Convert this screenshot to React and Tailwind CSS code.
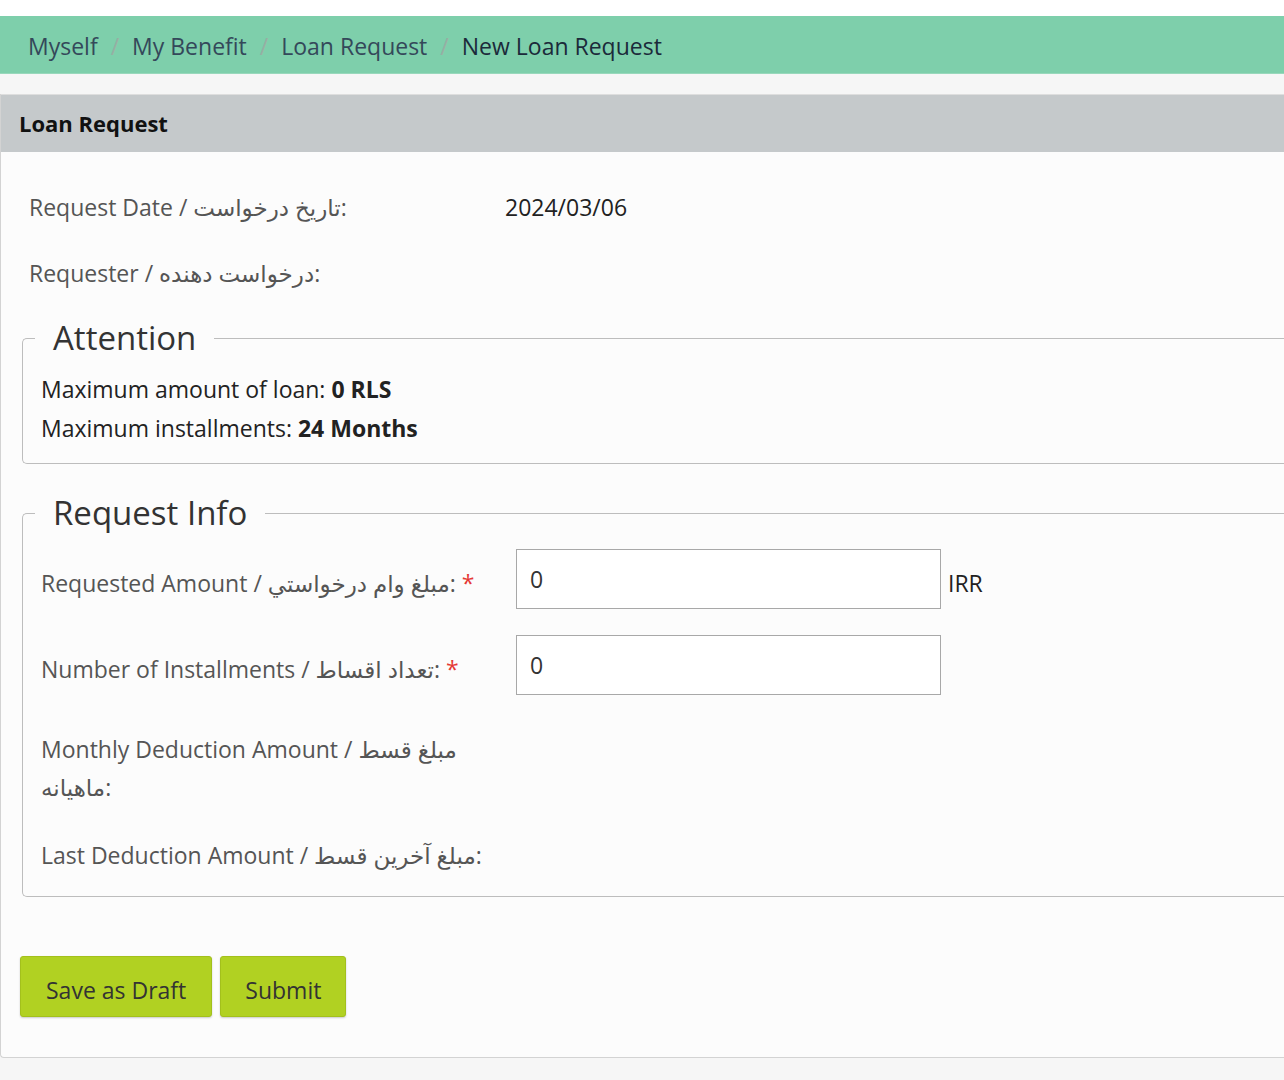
import React from 'react'

function Legend({ children }) {
  return (
    <legend className="-ml-[6px] px-[18px] text-[33px] leading-[40px] text-[#333]">{children}</legend>
  )
}

function Crumbs() {
  const items = ['Myself', 'My Benefit', 'Loan Request']
  return (
    <nav className="h-[58px] bg-[#7ecfab] border-b border-[#98d8bb] flex items-center pl-[28px] pt-[4px] text-[23px] text-[#34485a]">
      {items.map((item) => (
        <span key={item} className="flex items-center">
          <span>{item}</span>
          <span className="px-[13px] text-[#97aea3]">/</span>
        </span>
      ))}
      <span className="text-[#1b2a3a]">New Loan Request</span>
    </nav>
  )
}

function FieldRow({ label, required, children }) {
  return (
    <div className="flex items-center">
      <label className="w-[475px] shrink-0 whitespace-nowrap pt-[9px] text-[#555]">
        {label}
        {required && <span className="text-[#e53935]"> *</span>}
      </label>
      {children}
    </div>
  )
}

export default function App() {
  return (
    <div className="min-h-screen bg-[#f6f6f6] font-['Open_Sans','DejaVu_Sans',sans-serif] text-[23px]">
      <div className="h-4 bg-white" />
      <Crumbs />

      <div className="mt-[20px] bg-[#fcfcfc] border-l border-b border-[#d3d3d3] rounded-bl-[4px]">
        <div className="h-[58px] bg-[#c5c9cb] border-t border-[#dedede] flex items-center px-[18px] text-[22px] font-bold text-[#111]">
          Loan Request
        </div>

        <div className="pl-[21px] pt-[39px] pb-[40px]">
          <div className="pl-[7px] text-[#555]">
            <div className="flex items-center h-[32px]">
              <span className="w-[476px] shrink-0">Request Date / تاریخ درخواست:</span>
              <span className="text-[#222]">2024/03/06</span>
            </div>
            <div className="flex items-center h-[32px] mt-[34px]">
              <span>Requester / درخواست دهنده:</span>
            </div>
          </div>

          <fieldset className="mt-[29px] border border-[#bdbdbd] rounded-[5px] border-r-0 rounded-r-none pl-[18px] pt-[12px] pb-[15px] text-[#222]">
            <Legend>Attention</Legend>
            <div className="leading-[39px]">
              Maximum amount of loan: <b>0 RLS</b>
            </div>
            <div className="leading-[39px]">
              Maximum installments: <b>24 Months</b>
            </div>
          </fieldset>

          <fieldset className="mt-[29px] border border-[#bdbdbd] rounded-[5px] border-r-0 rounded-r-none pl-[18px] pt-[16px] pb-[22px]">
            <Legend>Request Info</Legend>

            <FieldRow label="Requested Amount / مبلغ وام درخواستي:" required>
              <input
                defaultValue="0"
                className="w-[425px] h-[60px] border border-[#a8a8a8] bg-white px-[13px] text-[#333] outline-none"
              />
              <span className="ml-[7px] pt-[9px] text-[#222]">IRR</span>
            </FieldRow>

            <div className="mt-[26px]">
              <FieldRow label="Number of Installments / تعداد اقساط:" required>
                <input
                  defaultValue="0"
                  className="w-[425px] h-[60px] border border-[#a8a8a8] bg-white px-[13px] text-[#333] outline-none"
                />
              </FieldRow>
            </div>

            <div className="mt-[35px] w-[475px] leading-[38px] text-[#555]">
              Monthly Deduction Amount / مبلغ قسط
              <br />
              ماهیانه:
            </div>

            <div className="mt-[30px] leading-[38px] text-[#555]">Last Deduction Amount / مبلغ آخرین قسط:</div>
          </fieldset>

          <div className="mt-[59px] -ml-[2px] flex gap-[8px]">
            <button className="h-[61px] px-[25px] pt-[8px] bg-[#b1d122] border border-[#a3c01c] rounded-[3px] shadow-[0_1px_2px_rgba(0,0,0,0.2)] text-[#333]">
              Save as Draft
            </button>
            <button className="h-[61px] px-[24px] pt-[8px] bg-[#b1d122] border border-[#a3c01c] rounded-[3px] shadow-[0_1px_2px_rgba(0,0,0,0.2)] text-[#333]">
              Submit
            </button>
          </div>
        </div>
      </div>
    </div>
  )
}
